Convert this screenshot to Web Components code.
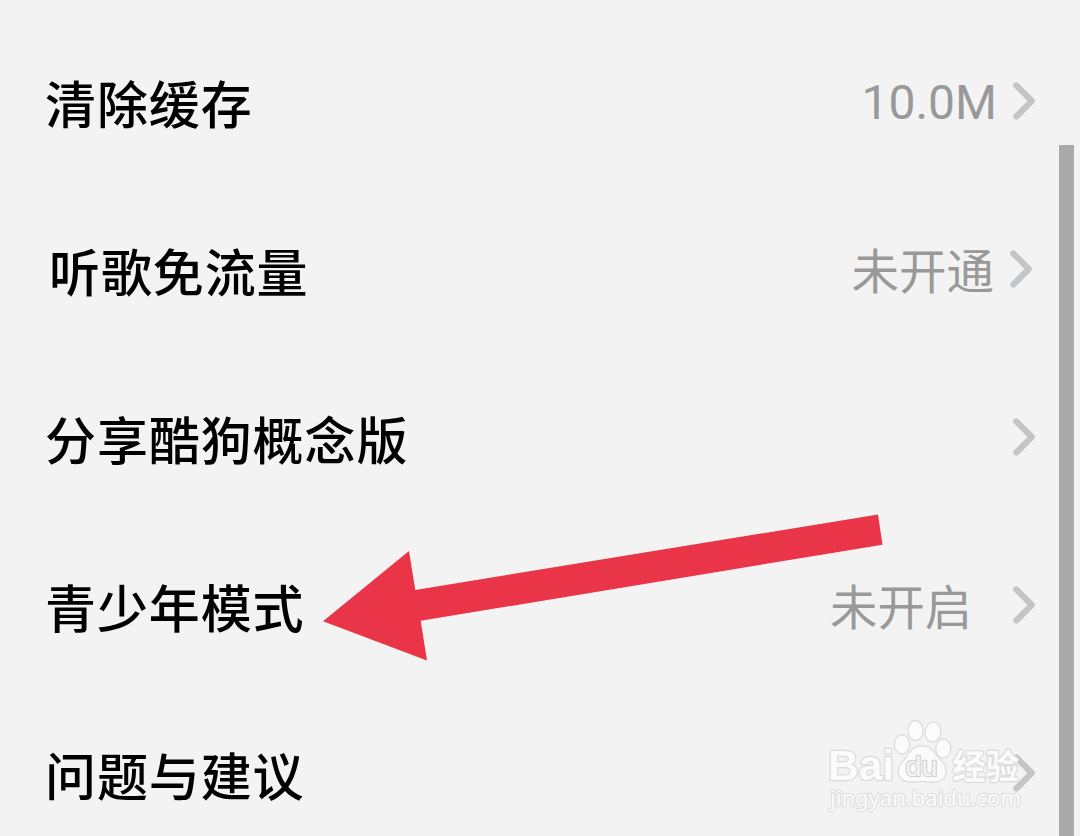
<!DOCTYPE html>
<html lang="zh-CN">
<head>
<meta charset="utf-8">
<title>设置</title>
<style>
    body {
        margin: 0;
        background: #f3f3f3;
        font-family: Roboto, "Noto Sans CJK SC", sans-serif;
    }
</style>
</head>
<body>
<settings-page>
    <setting-row label="清除缓存" style="--value-gap: 16px; --value-drop: 4px">10.0M</setting-row>
    <setting-row label="听歌免流量" style="--label-indent: 4px; --edge: 48px; --value-gap: 16px; --value-size: 47.5px">未开通</setting-row>
    <setting-row label="分享酷狗概念版"></setting-row>
    <setting-row label="青少年模式" style="--value-gap: 41px; --value-size: 47.3px">未开启</setting-row>
    <setting-row label="问题与建议"></setting-row>
    <pointer-arrow slot="overlay"></pointer-arrow>
    <site-watermark slot="overlay"></site-watermark>
</settings-page>

<script>
class SettingsPage extends HTMLElement {
    constructor() {
        super();
        this.attachShadow({ mode: 'open' });
    }

    connectedCallback() {
        this.shadowRoot.innerHTML = `
            <style>
                :host {
                    display: flex;
                    position: relative;
                    width: 1080px;
                    height: 836px;
                    overflow: hidden;
                }
                .list {
                    flex: 1;
                    padding-top: 17px;
                }
                .track {
                    width: 15px;
                    padding: 145px 6px 0 0;
                    display: flex;
                }
                .thumb {
                    flex: 1;
                    background: #aaa;
                }
            </style>
            <div class="list"><slot></slot></div>
            <div class="track"><div class="thumb"></div></div>
            <slot name="overlay"></slot>
        `;
    }
}

class SettingRow extends HTMLElement {
    constructor() {
        super();
        this.attachShadow({ mode: 'open' });
    }

    connectedCallback() {
        this.shadowRoot.innerHTML = `
            <style>
                :host {
                    display: flex;
                    align-items: center;
                    box-sizing: border-box;
                    height: 168px;
                    padding-left: calc(45px + var(--label-indent, 0px));
                    /* the scroll track takes 21px on the right */
                    padding-right: calc(var(--edge, 45px) - 21px);
                }
                .label {
                    flex: 1;
                    padding-top: 11px;
                    font-size: 51px;
                    font-weight: 500;
                    letter-spacing: 0.9px;
                    line-height: 76px;
                    color: #000;
                }
                .value {
                    margin-right: var(--value-gap, 0);
                    padding-top: var(--value-drop, 7px);
                    font-size: var(--value-size, 48px);
                    line-height: 70px;
                    color: #999;
                }
                svg {
                    display: block;
                }
            </style>
            <span class="label"></span>
            <span class="value"><slot></slot></span>
            <svg width="22" height="38" viewBox="0 0 22 38" fill="none">
                <path d="M3.3 3.5 L18.8 19 L3.3 34.5" stroke="#c3c5c7" stroke-width="6.2" stroke-linecap="round" stroke-linejoin="round"/>
            </svg>
        `;
        this.shadowRoot.querySelector('.label').textContent = this.getAttribute('label');
    }
}

class PointerArrow extends HTMLElement {
    constructor() {
        super();
        this.attachShadow({ mode: 'open' });
    }

    connectedCallback() {
        this.shadowRoot.innerHTML = `
            <style>
                :host {
                    position: absolute;
                    left: 320px;
                    top: 510px;
                }
                svg {
                    display: block;
                }
            </style>
            <svg width="570" height="155" viewBox="320 510 570 155">
                <polygon fill="#ea3549" points="323,621.3 409,551 415.3,590 878,514.5 882.5,544.7 420.7,620.8 427,660.5"/>
            </svg>
        `;
    }
}

class SiteWatermark extends HTMLElement {
    constructor() {
        super();
        this.attachShadow({ mode: 'open' });
    }

    connectedCallback() {
        this.shadowRoot.innerHTML = `
            <style>
                :host {
                    position: absolute;
                    left: 820px;
                    top: 712px;
                }
                svg {
                    display: block;
                }
                text, .paw {
                    fill: #fbfbfb;
                    stroke: #dadada;
                    stroke-width: 2.4px;
                    paint-order: stroke;
                    stroke-linejoin: round;
                }
                .brand {
                    font: bold 43px "Liberation Sans", sans-serif;
                }
                .cjk {
                    font: bold 34px "Noto Sans CJK SC", sans-serif;
                }
                .du {
                    font: 27px "Liberation Sans", sans-serif;
                    fill: #f5f5f5;
                    stroke: #d2d2d2;
                }
                .url {
                    font: 22px "Noto Sans", sans-serif;
                    stroke: #e0e0e0;
                }
            </style>
            <svg width="215" height="110" viewBox="820 712 215 110">
                <text class="brand" x="828" y="780" textLength="66" lengthAdjust="spacingAndGlyphs">Bai</text>
                <g class="paw">
                    <ellipse cx="902" cy="744.5" rx="7" ry="9"/>
                    <ellipse cx="915.5" cy="730.5" rx="7" ry="9.5"/>
                    <ellipse cx="933" cy="732" rx="7.3" ry="9.3" transform="rotate(8 933 732)"/>
                    <ellipse cx="943.3" cy="748.5" rx="7" ry="9"/>
                    <path d="M922 746.5 C931 746.5 934 753 938 758 C943 763 946 766 945.5 772 C945 779 939 782 932 781.5 C926 781 919 780.5 913 781.5 C904 782 899 778 899 771 C899 765 903 762 907 757 C911 751 914 746.5 922 746.5 Z"/>
                </g>
                <text class="du" x="905.5" y="775.5" textLength="32" lengthAdjust="spacingAndGlyphs">du</text>
                <text class="cjk" x="952.5" y="778.5" textLength="66" lengthAdjust="spacingAndGlyphs">经验</text>
                <text class="url" x="830" y="806" textLength="191" lengthAdjust="spacingAndGlyphs">jingyan.baidu.com</text>
            </svg>
        `;
    }
}

customElements.define('settings-page', SettingsPage);
customElements.define('setting-row', SettingRow);
customElements.define('pointer-arrow', PointerArrow);
customElements.define('site-watermark', SiteWatermark);
</script>
</body>
</html>
